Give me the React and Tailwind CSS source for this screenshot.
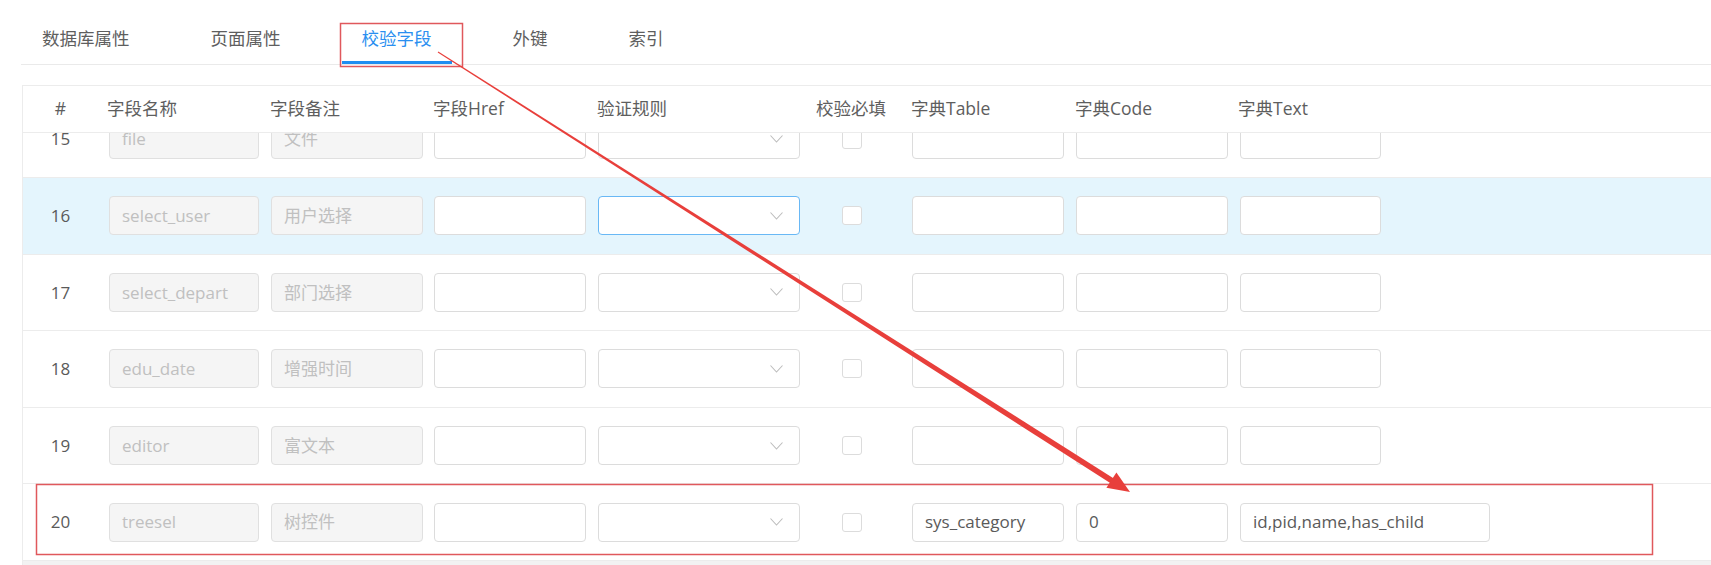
import React from 'react';

const TABS = ['数据库属性', '页面属性', '校验字段', '外键', '索引'];

const ROWS = [
  { no: 15, name: 'file', remark: '文件' },
  { no: 16, name: 'select_user', remark: '用户选择', active: true },
  { no: 17, name: 'select_depart', remark: '部门选择' },
  { no: 18, name: 'edu_date', remark: '增强时间' },
  { no: 19, name: 'editor', remark: '富文本' },
  { no: 20, name: 'treesel', remark: '树控件', table: 'sys_category', code: '0', text: 'id,pid,name,has_child' },
];

function Field({ value, disabled, className = '' }) {
  return (
    <div
      className={`h-[39px] rounded-[4px] border px-[12px] flex items-center text-[17px] whitespace-nowrap overflow-hidden ${
        disabled
          ? 'bg-[#f5f5f5] border-[#e0e0e0] text-[#c0c0c0]'
          : 'bg-white border-[#dcdcdc] text-[#5a5a5a]'
      } ${className}`}
    >
      {value}
    </div>
  );
}

function SelectBox({ focused }) {
  return (
    <div
      className={`h-[39px] w-[202px] rounded-[4px] border bg-white flex items-center justify-end pr-[16px] ${
        focused ? 'border-[#69b8f5]' : 'border-[#dcdcdc]'
      }`}
    >
      <svg width="13" height="8" viewBox="0 0 13 8" fill="none">
        <polyline points="0.5,0.5 6.5,7 12.5,0.5" stroke="#bdbdbd" strokeWidth="1.1" />
      </svg>
    </div>
  );
}

function HeaderRow() {
  const cell = 'shrink-0 text-[17.5px] text-[#5e5e5e] leading-none';
  return (
    <div className="flex items-center h-[47px] border-b border-[#ececec] bg-white">
      <div className={`${cell} w-[75px] text-center`}>#</div>
      <div className={`${cell} w-[165px] pl-[9px]`}>字段名称</div>
      <div className={`${cell} w-[163px] pl-[7px]`}>字段备注</div>
      <div className={`${cell} w-[164px] pl-[7px]`}>字段Href</div>
      <div className={`${cell} w-[218px] pl-[7px]`}>验证规则</div>
      <div className={`${cell} w-[96px] pl-[8px]`}>校验必填</div>
      <div className={`${cell} w-[164px] pl-[7px]`}>字典Table</div>
      <div className={`${cell} w-[164px] pl-[7px]`}>字典Code</div>
      <div className={`${cell} pl-[6px]`}>字典Text</div>
    </div>
  );
}

function BodyRow({ row }) {
  return (
    <div
      className={`flex items-center h-[76.6px] border-b border-[#ececec] ${
        row.active ? 'bg-[#e4f5fd]' : 'bg-white'
      }`}
    >
      <div className="shrink-0 w-[75px] text-center text-[17px] text-[#5a5a5a]">{row.no}</div>
      <div className="shrink-0 w-[165px] pl-[11px]">
        <Field value={row.name} disabled className="w-[150px]" />
      </div>
      <div className="shrink-0 w-[163px] pl-[8px]">
        <Field value={row.remark} disabled className="w-[152px]" />
      </div>
      <div className="shrink-0 w-[164px] pl-[8px]">
        <Field className="w-[152px]" />
      </div>
      <div className="shrink-0 w-[218px] pl-[8px]">
        <SelectBox focused={row.active} />
      </div>
      <div className="shrink-0 w-[96px] pl-[34px]">
        <div className="w-[20px] h-[19px] rounded-[3px] border border-[#dcdcdc] bg-white" />
      </div>
      <div className="shrink-0 w-[164px] pl-[8px]">
        <Field value={row.table} className="w-[152px]" />
      </div>
      <div className="shrink-0 w-[164px] pl-[8px]">
        <Field value={row.code} className="w-[152px]" />
      </div>
      <div className="shrink-0 pl-[8px]">
        <Field value={row.text} className={row.text ? 'w-[250px]' : 'w-[141px]'} />
      </div>
    </div>
  );
}

export default function App() {
  return (
    <div className="relative w-full h-[565px] overflow-hidden bg-white font-['Open_Sans','Noto_Sans_CJK_SC',sans-serif]">
      {/* tabs */}
      <div className="ml-[21px] h-[65px] border-b border-[#eaeaea] flex gap-[41px] pl-[1px]">
        {TABS.map((t, i) => (
          <div
            key={t}
            className={`h-[64px] px-[20px] pt-[26px] text-[17.5px] leading-[24px] ${
              i === 2 ? 'text-[#2a8ff0] border-b-[3px] border-[#1f8ef1]' : 'text-[#5e5e5e]'
            }`}
          >
            {t}
          </div>
        ))}
      </div>

      {/* table */}
      <div className="mt-[20px] ml-[22px] border-t border-l border-[#ececec]">
        <HeaderRow />
        <div className="h-[428px] overflow-hidden">
          <div className="-mt-[31.6px]">
            {ROWS.map(r => (
              <BodyRow key={r.no} row={r} />
            ))}
          </div>
        </div>
        <div className="h-[6px] bg-[#f2f2f2]" />
      </div>

      {/* annotations */}
      <svg
        className="absolute inset-0 pointer-events-none"
        width="1711"
        height="565"
        viewBox="0 0 1711 565"
      >
        <rect x="340.5" y="23.5" width="122" height="43" fill="none" stroke="#e0585c" strokeWidth="1.5" />
        <rect x="36.5" y="484.5" width="1616" height="70" fill="none" stroke="#e0585c" strokeWidth="1.5" />
        <polygon
          points="438.3,51.5 1114.6,478.9 1111.4,483.7 437.7,52.5"
          fill="#e83f3b"
        />
        <polygon points="1130,492 1106.4,487.8 1116.4,472.4" fill="#e83f3b" />
      </svg>
    </div>
  );
}
